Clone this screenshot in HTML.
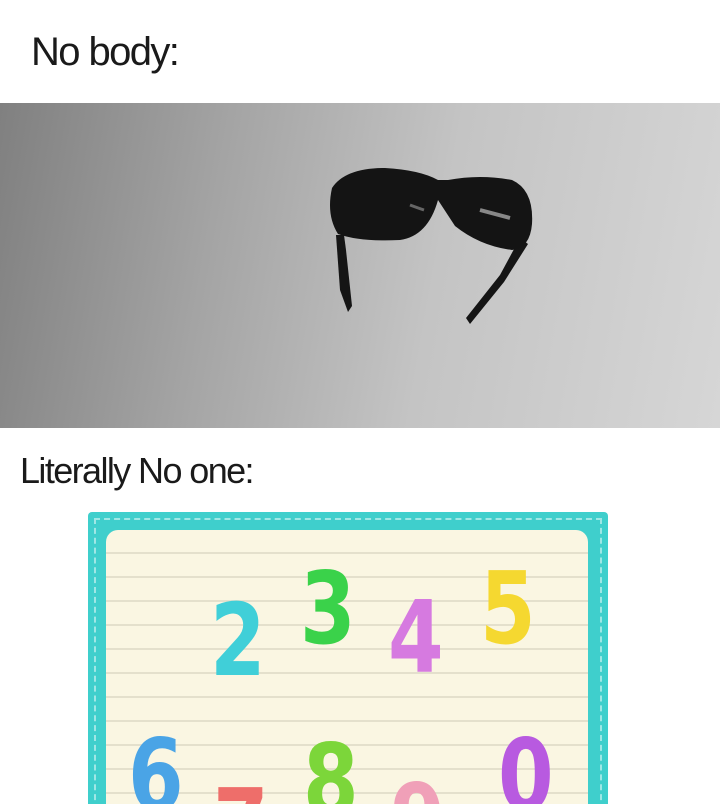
<!DOCTYPE html>
<html><head><meta charset="utf-8"><style>
html,body{margin:0;width:720px;height:804px;overflow:hidden;}
body{background:#fff;position:relative;font-family:"Liberation Sans",sans-serif;}
.t{position:absolute;color:#1a1a1a;letter-spacing:-1.6px;}
.gray{position:absolute;left:0;top:103px;width:720px;height:325px;background:linear-gradient(100deg,#808080 0%,#a4a4a4 30%,#c4c4c4 60%,#d6d6d6 100%);}
.card{position:absolute;left:88px;top:512px;width:520px;height:292px;background:#3fcfcc;border-radius:4px 4px 0 0;overflow:hidden;}
.dash{position:absolute;left:94px;top:518px;width:504px;height:290px;border:2px dashed rgba(255,255,255,0.5);border-bottom:none;}
.paper{position:absolute;left:106px;top:530px;width:482px;height:274px;background:repeating-linear-gradient(180deg,#faf6e2 0px,#faf6e2 22px,#e4e0cc 22px,#e4e0cc 24px);border-radius:12px 12px 0 0;}
.clip{position:absolute;left:0;top:0;width:720px;height:804px;overflow:hidden;}
.d{position:absolute;font-family:"DejaVu Sans","Liberation Sans",sans-serif;font-weight:bold;line-height:1;font-size:100px;transform:scaleX(0.8);transform-origin:left top;}
</style></head><body>
<div class="t" style="left:31px;top:30px;font-size:40px;">No body:</div>
<div class="gray"></div>
<svg style="position:absolute;left:0;top:0" width="720" height="430">
<path d="M336 235 L340 290 L348 312 L352 306 L346 250 L344 235Z" fill="#151515"/>
<path d="M520 238 L500 275 L466 318 L470 324 L504 282 L528 244Z" fill="#151515"/>
<path d="M332 188 Q345 168 385 168 Q420 170 438 180 L448 180 Q480 174 512 180 Q534 190 532 224 Q530 248 512 250 Q480 246 455 226 L438 200 Q428 236 400 240 Q360 242 338 234 Q326 215 332 188Z" fill="#141414"/>
<path d="M410 205 Q418 208 424 210" stroke="#666" stroke-width="3" fill="none"/>
<path d="M480 210 Q495 214 510 218" stroke="#888" stroke-width="4" fill="none"/>
</svg>
<div class="t" style="left:20px;top:450px;font-size:36px;">Literally No one:</div>
<div class="clip">
<div class="card"></div>
<div class="dash"></div>
<div class="paper"></div>
<div class="d" style="left:210px;top:591px;color:#40cfd8;">2</div>
<div class="d" style="left:300px;top:559px;color:#3ad24a;">3</div>
<div class="d" style="left:388px;top:588px;color:#d67ae0;">4</div>
<div class="d" style="left:480px;top:559px;color:#f5d830;">5</div>
<div class="d" style="left:128px;top:726px;color:#4aa4e6;">6</div>
<div class="d" style="left:213px;top:776px;color:#ee6e6a;">7</div>
<div class="d" style="left:303px;top:731px;color:#7cd63a;">8</div>
<div class="d" style="left:390px;top:771px;color:#f0a0b8;">9</div>
<div class="d" style="left:498px;top:726px;color:#b85ae0;">0</div>
</div>
</body></html>
